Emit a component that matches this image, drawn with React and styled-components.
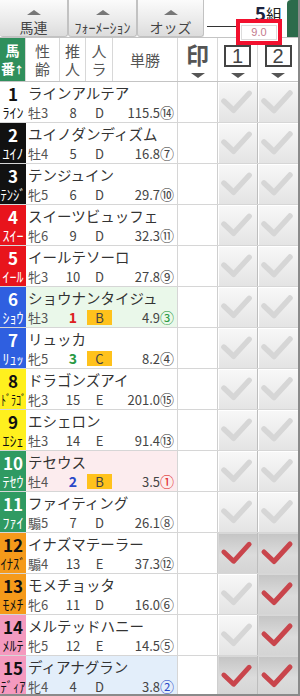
import React from 'react';
import styled, { createGlobalStyle } from 'styled-components';

const GlobalStyle = createGlobalStyle`
  html, body { margin: 0; padding: 0; background: #fff; }
  body { font-family: "Noto Sans CJK JP", "Noto Sans", sans-serif; }
`;

const WAKU = {
  1: { bg: '#ffffff', fg: '#111111' },
  2: { bg: '#111111', fg: '#ffffff' },
  3: { bg: '#e8141c', fg: '#ffffff' },
  4: { bg: '#2f5fe0', fg: '#ffffff' },
  5: { bg: '#fff01e', fg: '#111111' },
  6: { bg: '#2f9a62', fg: '#ffffff' },
  7: { bg: '#f59a1a', fg: '#111111' },
  8: { bg: '#f49abf', fg: '#111111' },
};

const POP = {
  1: { color: '#dd2020', row: '#fcecee' },
  2: { color: '#2a48c8', row: '#e3eefa' },
  3: { color: '#2a9a44', row: '#eaf8ea' },
};

const CIRCLED = ['', '①', '②', '③', '④', '⑤', '⑥', '⑦', '⑧', '⑨', '⑩', '⑪', '⑫', '⑬', '⑭', '⑮'];

// [馬番, 枠, 馬名, 略称, 性齢, 推人, 人ラ, 単勝, 人気, 1, 2]
const horses = [
  [1, 1, 'ラインアルテア', 'ﾗｲﾝ', '牡3', 8, 'D', '115.5', 14, false, false],
  [2, 2, 'ユイノダンディズム', 'ﾕｲﾉ', '牡4', 5, 'D', '16.8', 7, false, false],
  [3, 2, 'テンジュイン', 'ﾃﾝｼﾞ', '牝5', 6, 'D', '29.7', 10, false, false],
  [4, 3, 'スイーツビュッフェ', 'ｽｲｰ', '牝6', 9, 'D', '32.3', 11, false, false],
  [5, 3, 'イールテソーロ', 'ｲｰﾙ', '牝3', 10, 'D', '27.8', 9, false, false],
  [6, 4, 'ショウナンタイジュ', 'ｼｮｳ', '牡3', 1, 'B', '4.9', 3, false, false],
  [7, 4, 'リュッカ', 'ﾘｭｯ', '牝5', 3, 'C', '8.2', 4, false, false],
  [8, 5, 'ドラゴンズアイ', 'ﾄﾞﾗｺﾞ', '牝3', 15, 'E', '201.0', 15, false, false],
  [9, 5, 'エシェロン', 'ｴｼｪ', '牡3', 14, 'E', '91.4', 13, false, false],
  [10, 6, 'テセウス', 'ﾃｾｳ', '牡4', 2, 'B', '3.5', 1, false, false],
  [11, 6, 'ファイティング', 'ﾌｧｲ', '騸5', 7, 'D', '26.1', 8, false, false],
  [12, 7, 'イナズマテーラー', 'ｲﾅｽﾞ', '騸4', 13, 'E', '37.3', 12, true, true],
  [13, 7, 'モメチョッタ', 'ﾓﾒﾁ', '牝6', 11, 'D', '16.0', 6, false, true],
  [14, 8, 'メルテッドハニー', 'ﾒﾙﾃ', '牝5', 12, 'E', '14.5', 5, false, true],
  [15, 8, 'ディアナグラン', 'ﾃﾞｨｱ', '牝4', 4, 'D', '3.8', 2, true, true],
];

const Frame = styled.div`
  position: relative;
  width: 300px;
  height: 696px;
  box-sizing: border-box;
  border-right: 2px solid #8a8a8a;
  border-bottom: 2px solid #8a8a8a;
  overflow: hidden;
  background: #fff;
`;

const TopBar = styled.div`
  display: flex;
  height: 37px;
`;

const Tab = styled.div`
  width: ${p => p.$w}px;
  height: 37px;
  box-sizing: border-box;
  padding-top: 10px;
  text-align: center;
  background: linear-gradient(#fbfbfb, #e8e8e8 65%, #dcdcdc);
  border: 1px solid #c2c2c2;
  border-top: none;
  border-left: ${p => (p.$first ? 'none' : '1px solid #c2c2c2')};
  border-radius: 0 0 3px 3px;
`;

const UpTri = styled.span`
  display: block;
  width: 0;
  height: 0;
  margin: 0 auto 4px;
  border-left: 7px solid transparent;
  border-right: 7px solid transparent;
  border-bottom: 5px solid #777;
`;

const TabLabel = styled.span`
  display: block;
  font-size: 14px;
  line-height: 16px;
  color: #444;
  white-space: nowrap;
`;

const Count = styled.div`
  flex: 1;
  display: flex;
  flex-direction: column;
  align-items: flex-end;
  padding: 1px 5px 0 0;
`;

const CountText = styled.div`
  line-height: 23px;
  color: #222;
  white-space: nowrap;
  b { font-size: 19px; font-weight: 700; color: #1c2440; }
  span { font-size: 16px; }
`;

const CountLine = styled.div`
  align-self: flex-start;
  margin-left: 3px;
  width: 64px;
  height: 1px;
  background: #333;
`;

const SideTab = styled.div`
  width: 11px;
  background: #2c6b4b;
  border-radius: 4px 0 0 0;
`;

const OddsBox = styled.div`
  position: absolute;
  left: 236px;
  top: 19px;
  width: 46px;
  height: 26px;
  box-sizing: border-box;
  border: 4px solid #f2102e;
  background: #fff;
  display: flex;
  align-items: center;
  justify-content: center;
`;

const OddsInput = styled.span`
  width: 34px;
  height: 13px;
  border: 1px solid #dcdcdc;
  font-size: 11px;
  line-height: 13px;
  text-align: center;
  color: #c47a8c;
  font-family: "Liberation Sans", sans-serif;
`;

const cols = '26px 34px 26px 27px 65px 40px 40px 40px';

const HeadRow = styled.div`
  display: grid;
  grid-template-columns: ${cols};
  height: 45px;
  box-sizing: border-box;
  border-top: 1px solid #c4c4c4;
  border-bottom: 1px solid #c4c4c4;
`;

const HeadCell = styled.div`
  display: flex;
  flex-direction: column;
  align-items: center;
  justify-content: center;
  border-right: 1px solid #d8d8d8;
  font-size: ${p => (p.$green ? '14px' : '15px')};
  line-height: 18px;
  color: ${p => (p.$green ? '#fff' : '#555')};
  background: ${p => (p.$green ? '#2f8f5c' : '#fff')};
  font-weight: ${p => (p.$green ? 700 : 400)};
  white-space: nowrap;
`;

const Arrow = styled.span`
  font-size: 10px;
  margin-left: -1px;
`;

const MarkHead = styled.div`
  display: flex;
  flex-direction: column;
  align-items: center;
  justify-content: flex-end;
  padding-bottom: 3px;
  gap: 6px;
  border-right: 1px solid #d8d8d8;
  &:last-child { border-right: none; }
`;

const BigMark = styled.span`
  font-size: 23px;
  line-height: 25px;
  font-weight: 700;
  color: #555;
`;

const BoxNum = styled.span`
  width: 27px;
  height: 22px;
  box-sizing: border-box;
  border: 2px solid #444;
  font-family: "Liberation Sans", sans-serif;
  font-size: 20px;
  line-height: 18px;
  text-align: center;
  color: #444;
`;

const DownTri = styled.span`
  width: 0;
  height: 0;
  border-left: 7px solid transparent;
  border-right: 7px solid transparent;
  border-top: 5px solid #555;
`;

const Row = styled.div`
  display: grid;
  grid-template-columns: 26px 152px 40px 40px 40px;
  height: 41px;
  box-sizing: border-box;
  border-bottom: 1px solid #d6d6d6;
`;

const NumCell = styled.div`
  display: flex;
  flex-direction: column;
  align-items: center;
  background: ${p => p.$bg};
  color: ${p => p.$fg};
`;

const Num = styled.span`
  font-size: 17px;
  line-height: 21px;
  font-weight: 700;
  margin-top: 1px;
`;

const Abbr = styled.span`
  display: inline-block;
  font-size: 14px;
  line-height: 17px;
  white-space: nowrap;
  transform-origin: center;
`;

const Main = styled.div`
  background: ${p => p.$bg || '#fff'};
  border-right: 1px solid #d6d6d6;
  min-width: 0;
`;

const Name = styled.div`
  padding: 1px 0 0 2px;
  height: 19px;
  font-size: 14.5px;
  line-height: 19px;
  color: #333;
  white-space: nowrap;
`;

const Data = styled.div`
  display: grid;
  grid-template-columns: 34px 26px 27px 1fr;
  align-items: center;
  height: 20px;
  font-size: 13px;
  color: #444;
`;

const SexAge = styled.span`
  padding-left: 2px;
  color: #555;
`;

const Center = styled.span`
  text-align: center;
  color: ${p => p.$color || '#444'};
  font-weight: ${p => (p.$color ? 700 : 400)};
  font-size: ${p => (p.$color ? '14px' : '13px')};
`;

const Rank = styled.span`
  justify-self: center;
  width: 25px;
  height: 15px;
  line-height: 15px;
  text-align: center;
  background: ${p => (p.$hl ? '#ffc21c' : 'transparent')};
`;

const Odds = styled.span`
  text-align: right;
  padding-right: 3px;
  white-space: nowrap;
  span { font-size: 14px; color: ${p => p.$color || '#444'}; }
`;

const MarkCell = styled.div`
  background: #fff;
  border-right: 1px solid #cfcfcf;
`;

const CheckCell = styled.div`
  display: flex;
  align-items: center;
  justify-content: center;
  background: ${p =>
    p.$on
      ? 'linear-gradient(#c4c4c4, #dcdcdc 55%, #d4d4d4)'
      : 'linear-gradient(#f8f8f8, #ececec 60%, #e4e4e4)'};
  box-shadow: inset 1px 1px 0 ${p => (p.$on ? '#d8d8d8' : '#fff')};
  border-right: 1px solid #bdbdbd;
  &:last-child { border-right: none; }
`;

const Check = ({ on }) => (
  <svg width="40" height="40" viewBox="0 0 40 40">
    <path
      d="M6 19 L16 28.5 L32 11"
      fill="none"
      stroke={on ? '#c9454c' : '#d6d6d6'}
      strokeWidth={on ? 5 : 5.5}
      strokeLinecap="round"
      strokeLinejoin="round"
    />
  </svg>
);

const HorseRow = ({ h }) => {
  const [num, waku, name, abbr, sexAge, suijin, rank, odds, pop, c1, c2] = h;
  const w = WAKU[waku];
  const p = POP[pop];
  const top3 = suijin <= 3;
  const scale = Math.min(1, 25 / (7 * abbr.length));
  return (
    <Row>
      <NumCell $bg={w.bg} $fg={w.fg}>
        <Num>{num}</Num>
        <Abbr style={{ transform: `scaleX(${scale})` }}>{abbr}</Abbr>
      </NumCell>
      <Main $bg={p && p.row}>
        <Name>{name}</Name>
        <Data>
          <SexAge>{sexAge}</SexAge>
          <Center $color={top3 ? POP[suijin].color : null}>{suijin}</Center>
          <Rank $hl={top3}>{rank}</Rank>
          <Odds $color={p && p.color}>
            {odds}<span>{CIRCLED[pop]}</span>
          </Odds>
        </Data>
      </Main>
      <MarkCell />
      <CheckCell $on={c1}><Check on={c1} /></CheckCell>
      <CheckCell $on={c2}><Check on={c2} /></CheckCell>
    </Row>
  );
};

export default function App() {
  return (
    <>
      <GlobalStyle />
      <Frame>
        <TopBar>
          <Tab $w={68} $first><UpTri /><TabLabel>馬連</TabLabel></Tab>
          <Tab $w={69}><UpTri /><TabLabel>ﾌｫｰﾒｰｼｮﾝ</TabLabel></Tab>
          <Tab $w={67}><UpTri /><TabLabel>オッズ</TabLabel></Tab>
          <Count>
            <CountText><b>5</b><span>組</span></CountText>
            <CountLine />
          </Count>
          <SideTab />
        </TopBar>
        <HeadRow>
          <HeadCell $green><span>馬</span><span>番<Arrow>↑</Arrow></span></HeadCell>
          <HeadCell><span>性</span><span>齢</span></HeadCell>
          <HeadCell><span>推</span><span>人</span></HeadCell>
          <HeadCell><span>人</span><span>ラ</span></HeadCell>
          <HeadCell>単勝</HeadCell>
          <MarkHead><BigMark>印</BigMark><DownTri /></MarkHead>
          <MarkHead><BoxNum>1</BoxNum><DownTri /></MarkHead>
          <MarkHead><BoxNum>2</BoxNum><DownTri /></MarkHead>
        </HeadRow>
        {horses.map(h => <HorseRow key={h[0]} h={h} />)}
        <OddsBox><OddsInput>9.0</OddsInput></OddsBox>
      </Frame>
    </>
  );
}
